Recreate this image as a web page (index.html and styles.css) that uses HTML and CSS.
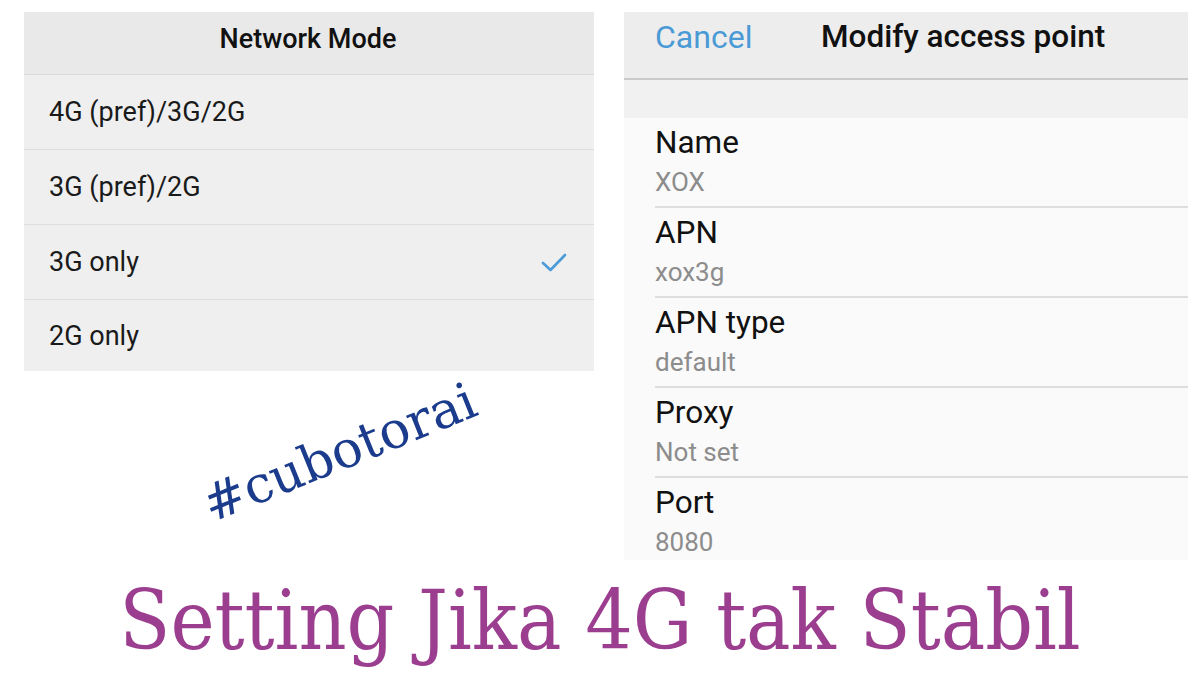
FILE: index.html
```html
<!DOCTYPE html>
<html>
<head>
<meta charset="utf-8">
<link rel="stylesheet" href="styles.css">
</head>
<body>
<div class="page">
  <div class="left-col">
    <div class="mode-panel">
      <div class="mode-header">Network Mode</div>
      <div class="mode-row">4G (pref)/3G/2G</div>
      <div class="mode-row">3G (pref)/2G</div>
      <div class="mode-row">3G only
        <svg class="check" width="28" height="22" viewBox="0 0 28 22"><path d="M3 12 L10.5 19 L25 4" fill="none" stroke="#4b9bd8" stroke-width="2.6" stroke-linecap="round" stroke-linejoin="round"/></svg>
      </div>
      <div class="mode-row">2G only</div>
    </div>
    <div class="tag-area">
      <div class="hashtag">#cubotorai</div>
    </div>
  </div>
  <div class="apn-panel">
    <div class="apn-header">
      <span class="cancel">Cancel</span>
      <span class="apn-title">Modify access point</span>
    </div>
    <div class="apn-band"></div>
    <div class="apn-list">
      <div class="apn-item"><div class="apn-label">Name</div><div class="apn-value">XOX</div></div>
      <div class="apn-item"><div class="apn-label">APN</div><div class="apn-value">xox3g</div></div>
      <div class="apn-item"><div class="apn-label">APN type</div><div class="apn-value">default</div></div>
      <div class="apn-item"><div class="apn-label">Proxy</div><div class="apn-value">Not set</div></div>
      <div class="apn-item last"><div class="apn-label">Port</div><div class="apn-value">8080</div></div>
    </div>
  </div>
</div>
<div class="title">Setting Jika 4G tak Stabil</div>
</body>
</html>
```

FILE: styles.css
```css
html, body {
  margin: 0;
  padding: 0;
  background: #ffffff;
  width: 1200px;
  height: 692px;
  overflow: hidden;
  font-family: Roboto, "Liberation Sans", sans-serif;
}

.page {
  display: flex;
  align-items: flex-start;
  padding: 12px 12px 0 24px;
  gap: 30px;
}

.left-col {
  width: 570px;
  display: flex;
  flex-direction: column;
}

.mode-panel {
  background: #efefef;
  height: 359px;
  display: flex;
  flex-direction: column;
}

.mode-header {
  flex-shrink: 0;
  height: 63px;
  box-sizing: border-box;
  background: #e9e9e9;
  border-bottom: 1px solid #dadada;
  display: flex;
  align-items: center;
  justify-content: center;
  font-size: 27px;
  font-weight: 500;
  color: #111;
  padding-right: 2px;
  padding-bottom: 8px;
}

.mode-row {
  flex-shrink: 0;
  height: 74px;
  border-bottom: 1px solid #dedede;
  display: flex;
  align-items: center;
  justify-content: space-between;
  padding: 0 26px 0 25px;
  font-size: 27px;
  color: #1a1a1a;
}

.mode-row:last-child {
  border-bottom: none;
  height: 71px;
}

.check {
  display: block;
}

.tag-area {
  height: 180px;
  position: relative;
}

.hashtag {
  position: absolute;
  left: 192px;
  top: 104px;
  font-family: "DejaVu Serif", serif;
  font-size: 51px;
  color: #1b3b8c;
  transform: rotate(-22deg);
  transform-origin: left bottom;
  white-space: nowrap;
}

.apn-panel {
  width: 564px;
  height: 548px;
  background: #fafafa;
  display: flex;
  flex-direction: column;
  overflow: hidden;
}

.apn-header {
  flex-shrink: 0;
  height: 68px;
  box-sizing: border-box;
  background: #ededed;
  border-bottom: 2px solid #cacaca;
  display: flex;
  align-items: flex-start;
  padding-left: 31px;
  padding-top: 6px;
  line-height: 38px;
}

.cancel {
  color: #4a9ad6;
  font-size: 32px;
  width: 166px;
}

.apn-title {
  font-size: 31.5px;
  font-weight: 500;
  color: #111;
}

.apn-band {
  flex-shrink: 0;
  height: 38px;
  background: #f1f1f1;
}

.apn-list {
  flex-shrink: 0;
  padding-left: 31px;
  display: flex;
  flex-direction: column;
}

.apn-item {
  flex-shrink: 0;
  height: 87px;
  border-bottom: 2px solid #dedede;
  display: flex;
  flex-direction: column;
  justify-content: center;
  gap: 5px;
  padding-bottom: 1px;
}

.apn-item.last {
  border-bottom: none;
}

.apn-label {
  font-size: 31.5px;
  color: #111;
  line-height: 36px;
}

.apn-value {
  font-size: 26px;
  color: #8c8c8c;
  line-height: 32px;
}

.title {
  margin-top: 12px;
  text-align: center;
  font-family: "DejaVu Serif", serif;
  font-stretch: condensed;
  font-size: 83px;
  color: #9c3e8f;
  white-space: nowrap;
}
```
